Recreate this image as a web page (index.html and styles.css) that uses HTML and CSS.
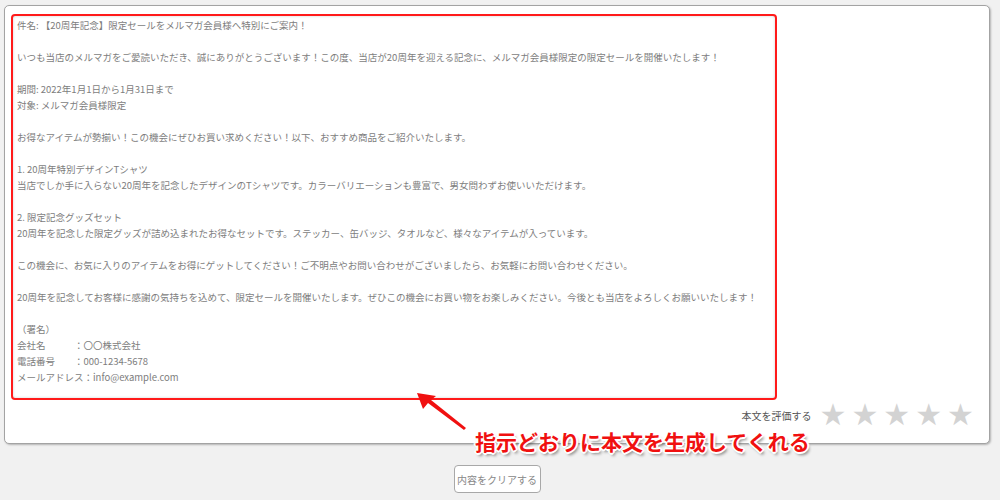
FILE: index.html
```html
<!DOCTYPE html>
<html lang="ja">

<head>
    <meta charset="UTF-8">
    <meta name="viewport" content="width=device-width, initial-scale=1.0">
    <title>メール本文生成</title>
    <link rel="stylesheet" href="styles.css">
</head>

<body>
    <div class="page">
        <div class="result-panel">
            <div class="result-text">件名: 【20周年記念】限定セールをメルマガ会員様へ特別にご案内！

いつも当店のメルマガをご愛読いただき、誠にありがとうございます！この度、当店が20周年を迎える記念に、メルマガ会員様限定の限定セールを開催いたします！

期間: 2022年1月1日から1月31日まで
対象: メルマガ会員様限定

お得なアイテムが勢揃い！この機会にぜひお買い求めください！以下、おすすめ商品をご紹介いたします。

1. 20周年特別デザインTシャツ
当店でしか手に入らない20周年を記念したデザインのTシャツです。カラーバリエーションも豊富で、男女問わずお使いいただけます。

2. 限定記念グッズセット
20周年を記念した限定グッズが詰め込まれたお得なセットです。ステッカー、缶バッジ、タオルなど、様々なアイテムが入っています。

この機会に、お気に入りのアイテムをお得にゲットしてください！ご不明点やお問い合わせがございましたら、お気軽にお問い合わせください。

20周年を記念してお客様に感謝の気持ちを込めて、限定セールを開催いたします。ぜひこの機会にお買い物をお楽しみください。今後とも当店をよろしくお願いいたします！

（署名）
会社名　　　：〇〇株式会社
電話番号　　：000-1234-5678
メールアドレス：info@example.com</div>
            <div class="rating">
                <span class="rating-label">本文を評価する</span>
                <div class="rating-stars">
                    <span class="star">★</span>
                    <span class="star">★</span>
                    <span class="star">★</span>
                    <span class="star">★</span>
                    <span class="star">★</span>
                </div>
            </div>
            <!-- 注釈 -->
            <svg class="note-arrow" width="60" height="50" viewBox="0 0 60 50">
                <polygon points="2,2 21,5 16,9 51,37 49,39 13,12 8,18" fill="#f01010" />
            </svg>
            <p class="note-text">指示どおりに本文を生成してくれる</p>
        </div>
        <div class="actions">
            <button class="clear-btn" type="button">内容をクリアする</button>
        </div>
    </div>
</body>

</html>
```

FILE: styles.css
```css
* {
    margin: 0;
    padding: 0;
    box-sizing: border-box;
}

body {
    background: #f1f1f1;
    font-family: "Noto Sans CJK JP", "Noto Sans", sans-serif;
    color: #7d7d7d;
}

.page {
    padding: 5px 10px 0 4px;
}

.result-panel {
    position: relative;
    height: 439px;
    padding: 8px 0 0 6px;
    background: #fff;
    border: 1px solid #a3a3a3;
    border-radius: 5px;
    box-shadow: 1px 1px 2px rgba(0, 0, 0, 0.25);
}

.result-text {
    width: 766px;
    height: 386px;
    padding: 1px 4px;
    border: 2px solid #ff1a1a;
    border-radius: 4px;
    box-shadow: inset 0 0 3px rgba(0, 0, 0, 0.18);
    font-size: 9.5px;
    line-height: 16px;
    white-space: pre-wrap;
    color: #7d7d7d;
}

.rating {
    display: flex;
    justify-content: flex-end;
    align-items: center;
    gap: 8px;
    margin-top: 1px;
    padding-right: 15px;
}

.rating-label {
    font-size: 10px;
    color: #555;
}

.rating-stars {
    display: flex;
    gap: 5px;
}

.star {
    font-family: "DejaVu Sans", sans-serif;
    font-size: 30px;
    line-height: 28px;
    color: #d3d3d3;
}

.note-arrow {
    position: absolute;
    left: 410px;
    top: 385px;
}

.note-text {
    position: absolute;
    left: 470px;
    top: 420px;
    font-size: 21px;
    font-weight: 700;
    line-height: 30px;
    color: #f01010;
    text-shadow:
        -1px -1px 0 #fff, 1px -1px 0 #fff, -1px 1px 0 #fff, 1px 1px 0 #fff,
        0 -2px 0 #fff, 0 2px 0 #fff, -2px 0 0 #fff, 2px 0 0 #fff,
        2px 3px 3px rgba(0, 0, 0, 0.45);
}

.actions {
    display: flex;
    justify-content: center;
    padding-top: 21px;
}

.clear-btn {
    width: 87px;
    height: 28px;
    background: #fff;
    border: 1px solid #a8a8a8;
    border-radius: 4px;
    font-family: "Noto Sans CJK JP", sans-serif;
    font-size: 10px;
    color: #888;
}
```
